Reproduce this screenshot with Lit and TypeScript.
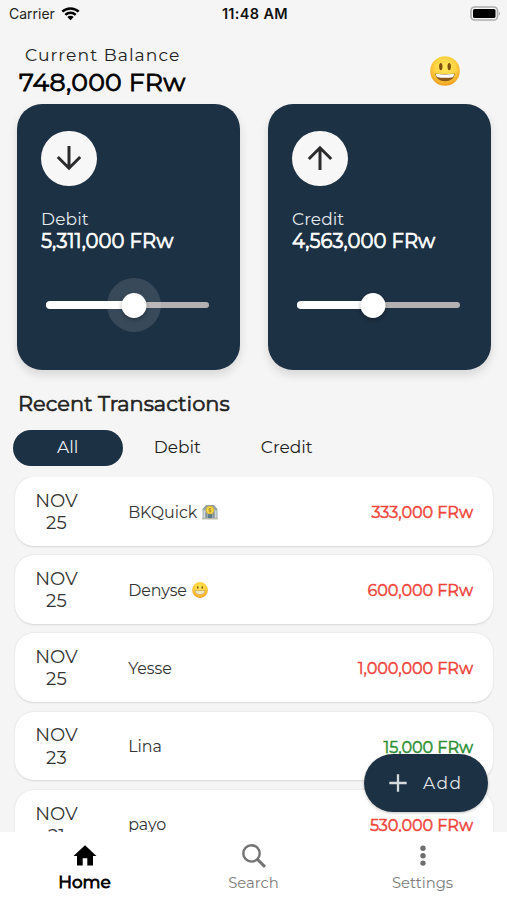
import { LitElement, html, css, svg } from "lit";
import { customElement, property } from "lit/decorators.js";
import { classMap } from "lit/directives/class-map.js";
import { styleMap } from "lit/directives/style-map.js";

type Emoji = "smile" | "grin" | "bank";

interface Transaction {
  month: string;
  day: string;
  name: string;
  emoji?: Emoji;
  amount: string;
  income?: boolean;
}

const transactions: Transaction[] = [
  { month: "NOV", day: "25", name: "BKQuick", emoji: "bank", amount: "333,000 FRw" },
  { month: "NOV", day: "25", name: "Denyse", emoji: "grin", amount: "600,000 FRw" },
  { month: "NOV", day: "25", name: "Yesse", amount: "1,000,000 FRw" },
  { month: "NOV", day: "23", name: "Lina", amount: "15,000 FRw", income: true },
  { month: "NOV", day: "21", name: "payo", amount: "530,000 FRw" },
];

@customElement("emoji-icon")
class EmojiIcon extends LitElement {
  @property() kind: Emoji = "smile";

  static styles = css`
    :host { display: block; }
    svg { display: block; width: 100%; height: 100%; }
  `;

  private bank() {
    return svg`
      <path d="M1 10 L8 2 H22 L29 10 V28 H1Z" fill="#a3b1b3"/>
      <path d="M1 10 L8 2 H22 L29 10Z" fill="#93a09f"/>
      <path d="M4.5 12V26M25.5 12V26" stroke="#d0d8d6" stroke-width="3"/>
      <path d="M8 14V26M22 14V26" stroke="#7a8b90" stroke-width="2"/>
      <rect x="11" y="18" width="8" height="10" fill="#5f7a88"/>
      <rect x="0" y="26.5" width="30" height="2.5" fill="#bdbcae"/>
      <circle cx="15" cy="11.5" r="7.6" fill="#e3bb35"/>
      <circle cx="15" cy="11.5" r="5.8" fill="#f6d94f"/>
      <path d="M17.5 9C15 7.5 12.6 8.5 12.8 10.1C13 11.8 17.3 11.1 17.3 13C17.3 14.7 14.6 15 12.5 13.8M15 7.4V15.8" stroke="#a77a10" stroke-width="1.2" fill="none"/>`;
  }

  private face() {
    const smile = this.kind === "smile";
    return svg`
      <defs>
        <radialGradient id="skin" cx=".5" cy=".38" r=".62">
          <stop offset="0" stop-color="#ffe95c"/>
          <stop offset=".6" stop-color="#fdd140"/>
          <stop offset="1" stop-color="#f09c1f"/>
        </radialGradient>
      </defs>
      <circle cx="15" cy="15" r="14.8" fill="url(#skin)"/>
      ${smile
        ? svg`
          <ellipse cx="10.8" cy="10.6" rx="1.7" ry="3.7" fill="#80500f"/>
          <ellipse cx="19.2" cy="10.6" rx="1.7" ry="3.7" fill="#80500f"/>
          <path d="M5.2 17.4Q15 18.6 24.8 17.4Q23.8 25.2 15 25.2Q6.2 25.2 5.2 17.4Z" fill="#8a5718"/>
          <path d="M5.8 17.8Q15 19 24.2 17.8Q24 20.8 22.6 21.2Q15 22.4 7.4 21.2Q6 20.8 5.8 17.8Z" fill="#fff"/>`
        : svg`
          <ellipse cx="10.8" cy="10.4" rx="1.5" ry="2.3" fill="#80500f"/>
          <ellipse cx="19.2" cy="10.4" rx="1.5" ry="2.3" fill="#80500f"/>
          <path d="M5.4 15.8Q15 17 24.6 15.8Q23.4 23.4 15 23.4Q6.6 23.4 5.4 15.8Z" fill="#fbf3dc" stroke="#b98a3a" stroke-width="1"/>
          <path d="M6.5 19H23.5" stroke="#cbb894" stroke-width=".8"/>`}`;
  }

  render() {
    return html`<svg viewBox="0 0 30 30">${this.kind === "bank" ? this.bank() : this.face()}</svg>`;
  }
}

@customElement("summary-card")
class SummaryCard extends LitElement {
  @property() label = "";
  @property() amount = "";
  @property() direction: "up" | "down" = "down";
  @property({ type: Number }) value = 50;
  @property({ type: Boolean }) pressed = false;

  static styles = css`
    :host {
      display: block;
      box-sizing: border-box;
      width: 223px;
      height: 266px;
      padding: 26.5px 24px 0;
      border-radius: 25px;
      background: #1d3144;
      box-shadow: 0 5px 10px rgba(0, 0, 0, 0.12);
      color: #fff;
    }
    .badge {
      display: grid;
      place-items: center;
      width: 55.5px;
      height: 55.5px;
      border-radius: 50%;
      background: #f7f7f7;
    }
    .badge svg { width: 26px; height: 26px; }
    .label {
      margin-top: 21.5px;
      font-size: 17px;
      line-height: 22px;
      letter-spacing: 0.1px;
      color: #e4e9ed;
    }
    .amount {
      font-size: 19.6px;
      line-height: 23px;
      -webkit-text-stroke: 0.7px currentColor;
      white-space: nowrap;
    }
    .slider {
      display: flex;
      align-items: center;
      position: relative;
      width: 163px;
      height: 54px;
      margin: 25.5px 0 0 5px;
    }
    .track {
      width: 100%;
      height: 6px;
      border-radius: 3px;
      background: #b3b0b2;
    }
    .active {
      position: absolute;
      left: 0;
      height: 8px;
      border-radius: 4px;
      background: #fff;
    }
    .thumb {
      position: absolute;
      width: 25px;
      height: 25px;
      border-radius: 50%;
      background: #fff;
      transform: translateX(-50%);
      box-shadow: 0 2px 4px rgba(0, 0, 0, 0.3);
    }
    .halo {
      position: absolute;
      width: 54px;
      height: 54px;
      border-radius: 50%;
      background: rgba(255, 255, 255, 0.12);
      transform: translateX(-50%);
    }
  `;

  render() {
    const at = `${this.value}%`;
    return html`
      <div class="badge">
        <svg viewBox="0 0 26 26" fill="none" stroke="#2b2a2c" stroke-width="3">
          ${this.direction === "down"
            ? svg`<path d="M13 1V24M1.8 12L13 23.2L24.2 12"/>`
            : svg`<path d="M13 25V2M1.8 14L13 2.8L24.2 14"/>`}
        </svg>
      </div>
      <div class="label">${this.label}</div>
      <div class="amount">${this.amount}</div>
      <div class="slider">
        <div class="track"></div>
        <div class="active" style=${styleMap({ width: at })}></div>
        ${this.pressed ? html`<div class="halo" style=${styleMap({ left: at })}></div>` : null}
        <div class="thumb" style=${styleMap({ left: at })}></div>
      </div>
    `;
  }
}

@customElement("transaction-row")
class TransactionRow extends LitElement {
  @property({ attribute: false }) item!: Transaction;

  static styles = css`
    :host {
      display: flex;
      align-items: center;
      flex: none;
      box-sizing: border-box;
      height: 68.7px;
      padding: 1.5px 19.5px 0 0;
      border-radius: 19px;
      background: #fff;
      box-shadow: 0 0.5px 2px rgba(0, 0, 0, 0.13);
      color: #343434;
    }
    .date {
      width: 83px;
      text-align: center;
      font-size: 18.2px;
      line-height: 22.3px;
      letter-spacing: 0.1px;
    }
    .name {
      display: flex;
      align-items: center;
      gap: 5px;
      flex: 1;
      margin-left: 30.2px;
      font-size: 15.9px;
      letter-spacing: -0.05px;
    }
    emoji-icon { width: 16px; height: 16px; }
    .amount {
      font-size: 16.1px;
      letter-spacing: -0.08px;
      -webkit-text-stroke: 0.5px currentColor;
      color: #f0443a;
    }
    .income { color: #2e8f33; }
  `;

  render() {
    const { month, day, name, emoji, amount, income } = this.item;
    return html`
      <div class="date">${month}<br />${day}</div>
      <div class="name">${name}${emoji ? html`<emoji-icon .kind=${emoji}></emoji-icon>` : null}</div>
      <div class=${classMap({ amount: true, income: !!income })}>${amount}</div>
    `;
  }
}

@customElement("app-root")
class AppRoot extends LitElement {
  static styles = css`
    :host {
      display: flex;
      flex-direction: column;
      position: relative;
      width: 507px;
      height: 900px;
      overflow: hidden;
      background: #f5f5f5;
      color: #000;
      font-family: Montserrat, Inter, "Open Sans", sans-serif;
    }
    .status {
      display: grid;
      grid-template-columns: 1fr auto 1fr;
      align-items: center;
      height: 27px;
      flex: none;
      padding: 0 6px 0 9px;
      box-sizing: border-box;
      font-family: Inter, sans-serif;
      font-size: 14px;
    }
    .carrier { display: flex; align-items: center; gap: 6px; color: #222; }
    .carrier svg { width: 19px; height: 15px; }
    .time { font-size: 14.5px; font-weight: 600; letter-spacing: 0.35px; color: #111; }
    .battery { justify-self: end; width: 31px; height: 15px; }
    .header {
      display: flex;
      justify-content: space-between;
      height: 77px;
      flex: none;
      box-sizing: border-box;
      padding: 17px 47px 0 19px;
    }
    .caption {
      padding-left: 6px;
      font-size: 17.2px;
      line-height: 22px;
      letter-spacing: 1.05px;
      color: #222;
    }
    .balance {
      font-size: 25.2px;
      line-height: 33px;
      letter-spacing: 0.2px;
      -webkit-text-stroke: 0.8px currentColor;
    }
    .mood { width: 30px; height: 30px; margin-top: 12px; }
    .cards {
      display: flex;
      gap: 28px;
      flex: none;
      padding-left: 17px;
    }
    .title {
      margin: 18px 0 0 18px;
      font-size: 20.9px;
      line-height: 32px;
      -webkit-text-stroke: 0.65px currentColor;
      color: #222;
    }
    .tabs {
      display: flex;
      height: 36px;
      flex: none;
      margin: 10px 0 11px 13px;
    }
    .tab {
      width: 109.5px;
      border-radius: 18px;
      font-size: 17px;
      line-height: 35px;
      text-align: center;
      color: #1d1d1d;
    }
    .selected { background: #1d3144; color: #e8edf0; }
    .list {
      display: flex;
      flex-direction: column;
      gap: 9.5px;
      flex: 1;
      min-height: 0;
      overflow: hidden;
      padding: 0 14.5px 0 15px;
    }
    .nav {
      display: grid;
      grid-template-columns: repeat(3, 1fr);
      height: 68px;
      flex: none;
      background: #fff;
    }
    .link {
      display: flex;
      flex-direction: column;
      align-items: center;
      padding-top: 9px;
      font-size: 14.8px;
      line-height: 20px;
      color: #7b7b7b;
    }
    .link svg { width: 30px; height: 30px; margin-bottom: 2px; }
    .current {
      font-size: 16.9px;
      line-height: 18px;
      -webkit-text-stroke: 0.9px currentColor;
      color: #000;
    }
    .add {
      display: flex;
      align-items: center;
      position: absolute;
      left: 364px;
      top: 753.5px;
      width: 123.5px;
      height: 58px;
      box-sizing: border-box;
      padding: 1px 0 0 25px;
      gap: 16px;
      border-radius: 29px;
      background: #1d3144;
      box-shadow: 0 1px 3px rgba(0, 0, 0, 0.25);
      color: #e2e6ea;
      font-size: 17px;
      letter-spacing: 1.4px;
    }
    .add svg { width: 18px; height: 18px; }
  `;

  render() {
    return html`
      <div class="status">
        <div class="carrier">
          Carrier
          <svg viewBox="0 0 19 15" fill="none" stroke="#000" stroke-width="2.5">
            <path d="M1.3 5.7A11.8 11.8 0 0 1 17.7 5.7"/>
            <path d="M4.3 8.9A7.5 7.5 0 0 1 14.7 8.9"/>
            <path d="M9.5 14.2L6.3 11A4.6 4.6 0 0 1 12.7 11Z" fill="#000" stroke="none"/>
          </svg>
        </div>
        <div class="time">11:48 AM</div>
        <svg class="battery" viewBox="0 0 31 15">
          <rect x="1" y="1" width="26.5" height="13" rx="3.6" fill="#f5f5f5" stroke="#acacac" stroke-width="1.6"/>
          <rect x="3" y="3" width="22.5" height="9" rx="1.6" fill="#000"/>
          <path d="M28.8 5.2Q31 7.5 28.8 9.8Z" fill="#a2a2a2"/>
        </svg>
      </div>
      <div class="header">
        <div>
          <div class="caption">Current Balance</div>
          <div class="balance">748,000 FRw</div>
        </div>
        <emoji-icon class="mood" kind="smile"></emoji-icon>
      </div>
      <div class="cards">
        <summary-card label="Debit" amount="5,311,000 FRw" direction="down" value="53.8" pressed></summary-card>
        <summary-card label="Credit" amount="4,563,000 FRw" direction="up" value="46.4"></summary-card>
      </div>
      <div class="title">Recent Transactions</div>
      <div class="tabs">
        ${["All", "Debit", "Credit"].map(
          (tab, i) => html`<div class=${classMap({ tab: true, selected: i === 0 })}>${tab}</div>`
        )}
      </div>
      <div class="list">
        ${transactions.map((t) => html`<transaction-row .item=${t}></transaction-row>`)}
      </div>
      <div class="nav">
        <div class="link current">
          <svg viewBox="0 0 30 30"><path d="M12.7 24.5V17.3H17.3V24.5H23V15H26.5L15 4.2L3.5 15H7V24.5Z"/></svg>
          Home
        </div>
        <div class="link">
          <svg viewBox="0 0 30 30" fill="none" stroke="#747474" stroke-width="2.4">
            <circle cx="12.5" cy="12.4" r="8.2"/>
            <path d="M18.4 18.3L26 25.9" stroke-width="3"/>
          </svg>
          Search
        </div>
        <div class="link">
          <svg viewBox="0 0 30 30" fill="#6e6e6e">
            <circle cx="15" cy="7.3" r="2.7"/><circle cx="15" cy="14.7" r="2.7"/><circle cx="15" cy="22.1" r="2.7"/>
          </svg>
          Settings
        </div>
      </div>
      <div class="add">
        <svg viewBox="0 0 18 18" stroke="#d5dade" stroke-width="2.3"><path d="M9 .3V17.7M.3 9H17.7"/></svg>
        Add
      </div>
    `;
  }
}
